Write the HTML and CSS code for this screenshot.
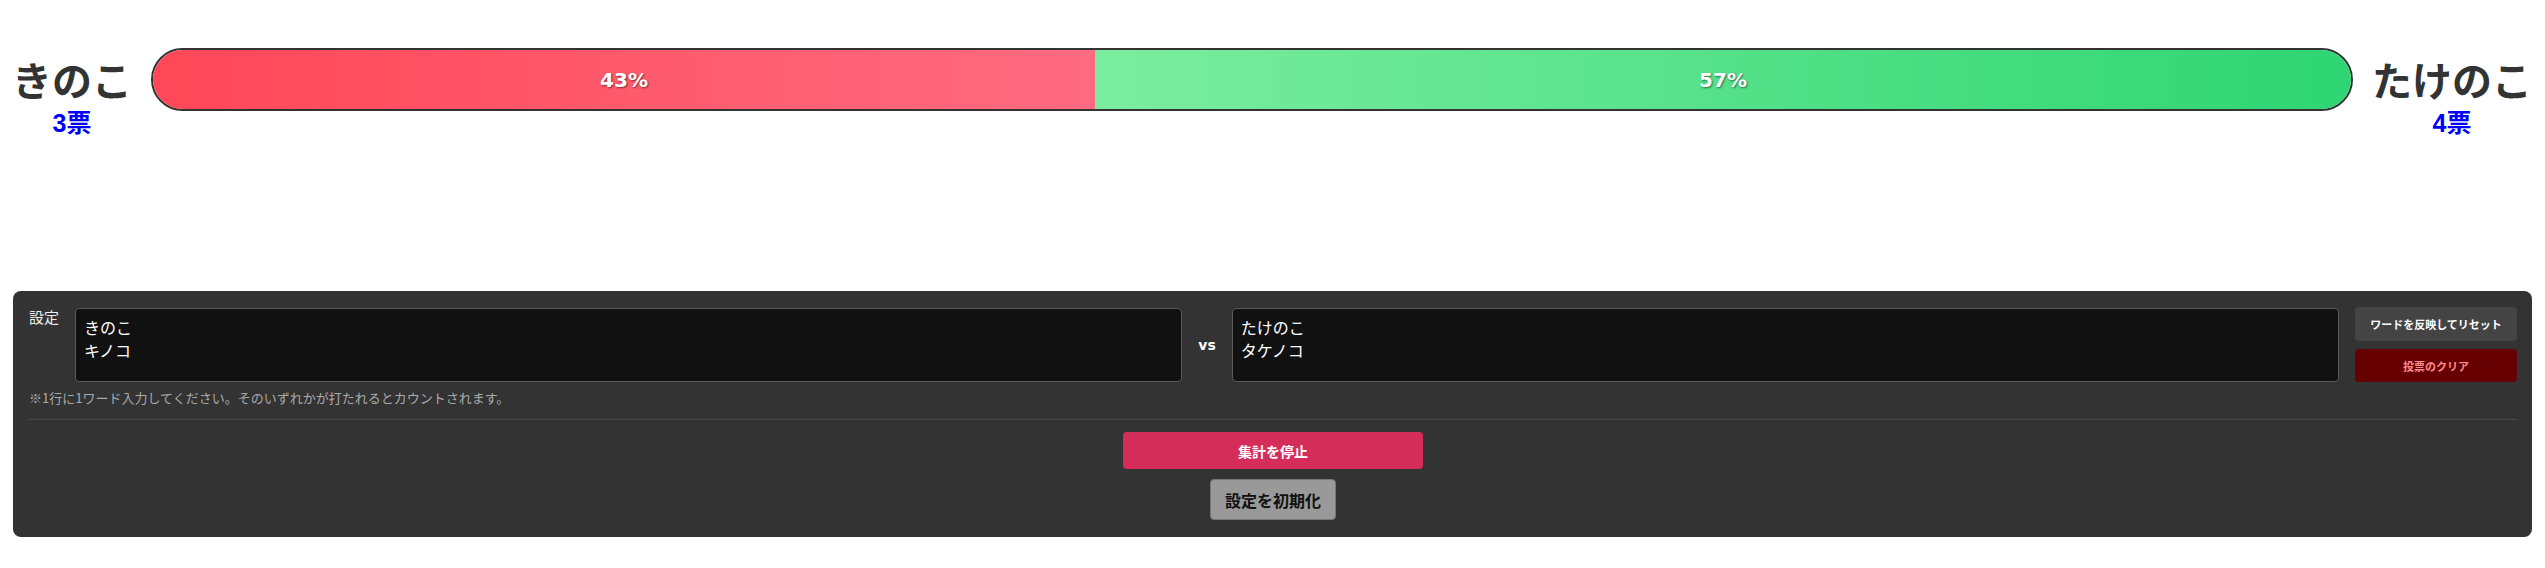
FILE: index.html
```html
<!DOCTYPE html>
<html lang="ja">
<head>
    <meta charset="UTF-8">
    <meta name="viewport" content="width=device-width, initial-scale=1.0">
    <title>きのこ vs たけのこ</title>
    <link rel="stylesheet" href="styles.css">
</head>
<body>
    <div class="vote-row">
        <div class="side">
            <div class="side-name" id="leftName">きのこ</div>
            <div class="side-count" id="leftCount"></div>
        </div>
        <div class="bar" id="bar"></div>
        <div class="side">
            <div class="side-name" id="rightName">たけのこ</div>
            <div class="side-count" id="rightCount"></div>
        </div>
    </div>

    <div class="panel">
        <div class="settings-row">
            <div class="settings-label">設定</div>
            <textarea class="words" id="leftWords">きのこ
キノコ</textarea>
            <div class="vs">vs</div>
            <textarea class="words" id="rightWords">たけのこ
タケノコ</textarea>
            <div class="side-buttons">
                <button class="btn btn-apply">ワードを反映してリセット</button>
                <button class="btn btn-clear">投票のクリア</button>
            </div>
        </div>
        <p class="hint">※1行に1ワード入力してください。そのいずれかが打たれるとカウントされます。</p>
        <div class="divider"></div>
        <div class="main-buttons">
            <button class="btn btn-stop">集計を停止</button>
            <button class="btn btn-init">設定を初期化</button>
        </div>
    </div>

    <script>
        let votes = { left: 3, right: 4 };

        function renderBar() {
            let total = votes.left + votes.right;
            let leftRate = total ? votes.left / total * 100 : 50;
            let rightRate = 100 - leftRate;

            document.getElementById("leftCount").innerText = `${votes.left}票`;
            document.getElementById("rightCount").innerText = `${votes.right}票`;

            document.getElementById("bar").innerHTML = `
                <div class="bar-left" style="width: ${leftRate}%">${Math.round(leftRate)}%</div>
                <div class="bar-right" style="width: ${rightRate}%">${Math.round(rightRate)}%</div>
            `;
        }

        window.onload = renderBar;
    </script>
</body>
</html>
```

FILE: styles.css
```css
body {
    margin: 0;
    font-family: "Liberation Sans", "Noto Sans CJK JP", sans-serif;
    background-color: white;
}
.vote-row {
    display: flex;
    align-items: flex-start;
    gap: 19px;
    padding: 48px 13px 0 12px;
    height: 243px;
}
.side {
    text-align: center;
    margin-top: 7px;
}
.side-name {
    font-family: "Noto Sans CJK JP", sans-serif;
    font-size: 40px;
    font-weight: bold;
    line-height: 48px;
    color: #333;
}
.side-count {
    margin-top: 5px;
    font-size: 25px;
    font-weight: bold;
    line-height: 30px;
    color: #0000ff;
}
.bar {
    flex: 1;
    display: flex;
    height: 63px;
    box-sizing: border-box;
    border: 2px solid #333;
    border-radius: 32px;
    overflow: hidden;
}
.bar-left, .bar-right {
    display: flex;
    align-items: center;
    justify-content: center;
    font-family: "DejaVu Sans", sans-serif;
    font-size: 20px;
    font-weight: bold;
    color: white;
    text-shadow: 1px 1px 2px rgba(0, 0, 0, 0.5);
}
.bar-left {
    background: linear-gradient(to right, #ff4757, #ff6b81);
}
.bar-right {
    background: linear-gradient(to right, #7bed9f, #2ed573);
}
.panel {
    margin: 0 13px;
    padding: 16px 15px 17px 16px;
    background-color: #333;
    border-radius: 8px;
}
.settings-row {
    display: flex;
    align-items: center;
    gap: 16px;
}
.settings-label {
    align-self: flex-start;
    font-family: "Noto Sans CJK JP", sans-serif;
    font-size: 15px;
    color: #eee;
    line-height: 20px;
}
.words {
    flex: 1;
    height: 74px;
    box-sizing: border-box;
    padding: 7px 8px;
    background-color: #111;
    color: white;
    border: 1px solid #5a5a5a;
    border-radius: 4px;
    font-family: "Noto Sans CJK JP", sans-serif;
    font-size: 16px;
    line-height: 23px;
    resize: none;
}
.vs {
    font-family: "DejaVu Sans", sans-serif;
    font-size: 14px;
    font-weight: bold;
    color: white;
}
.side-buttons {
    display: flex;
    flex-direction: column;
    gap: 8px;
    width: 162px;
}
.btn {
    border: none;
    border-radius: 4px;
    font-family: "Noto Sans CJK JP", sans-serif;
    font-weight: bold;
    cursor: pointer;
}
.btn-apply {
    height: 34px;
    background-color: #444;
    color: white;
    font-size: 11px;
}
.btn-clear {
    height: 33px;
    background-color: #660000;
    color: #ff8a8a;
    font-size: 11px;
}
.hint {
    margin: 8px 0 0;
    font-family: "Noto Sans CJK JP", sans-serif;
    font-size: 13px;
    line-height: 16px;
    color: #aaa;
}
.divider {
    margin-top: 13px;
    border-top: 1px solid #4a4a4a;
}
.main-buttons {
    display: flex;
    flex-direction: column;
    align-items: center;
    gap: 10px;
    margin-top: 12px;
}
.btn-stop {
    width: 300px;
    height: 37px;
    background-color: #d52d5a;
    color: white;
    font-size: 14px;
}
.btn-init {
    width: 126px;
    height: 41px;
    background-color: #999;
    color: #111;
    font-size: 16px;
    border: 1px solid #777;
}
```
